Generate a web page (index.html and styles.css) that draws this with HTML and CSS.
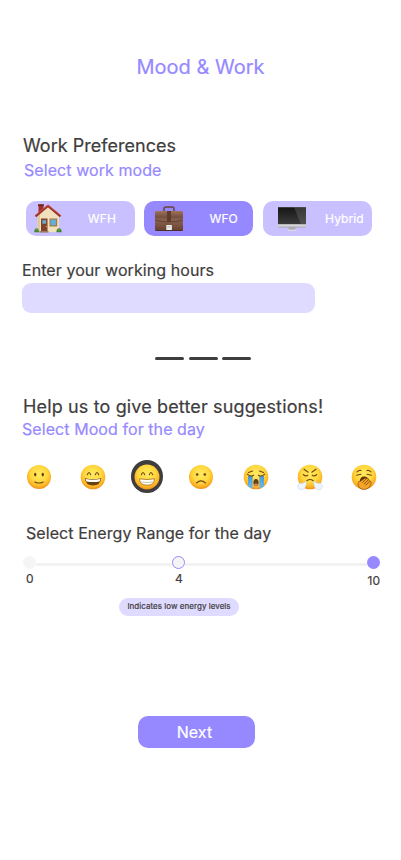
FILE: index.html
```html
<!DOCTYPE html>
<html lang="en">
<head>
<meta charset="utf-8">
<title>Mood &amp; Work</title>
<link rel="stylesheet" href="styles.css">
</head>
<body>
<svg class="defs" width="0" height="0" aria-hidden="true">
  <defs>
    <radialGradient id="face" cx=".5" cy=".38" r=".62"><stop offset="0" stop-color="#ffea62"/><stop offset=".55" stop-color="#ffd83e"/><stop offset=".82" stop-color="#fcb526"/><stop offset="1" stop-color="#ef8f18"/></radialGradient>
    <linearGradient id="leather" x2="0" y2="1"><stop offset="0" stop-color="#a07358"/><stop offset=".3" stop-color="#755040"/><stop offset=".45" stop-color="#8b6250"/><stop offset="1" stop-color="#65402f"/></linearGradient>
    <linearGradient id="screen" x2="0" y2="1"><stop offset="0" stop-color="#151515"/><stop offset="1" stop-color="#3c3c3c"/></linearGradient>
    <linearGradient id="metal" x2="0" y2="1"><stop offset="0" stop-color="#e6e6e6"/><stop offset=".9" stop-color="#d8d8da"/><stop offset="1" stop-color="#a9a9ad"/></linearGradient>
    <linearGradient id="tear" x2="0" y2="1"><stop offset="0" stop-color="#4696d6"/><stop offset="1" stop-color="#71bdf0"/></linearGradient>
  </defs>
</svg>
<main class="screen">
  <h1 class="title">Mood &amp; Work</h1>

  <h2 class="heading">Work Preferences</h2>
  <p class="sub sub-work">Select work mode</p>
  <div class="modes">
    <button class="mode">
      <svg class="mode-icon house" viewBox="0 0 28 29">
        <path d="M3.5 11 14 2l11 9v17H3.5z" fill="#f2dfbb"/>
        <path d="M3.5 11v17H6V10z" fill="#e0c9a0"/>
        <path d="M4.5 .5h5V6l-5 4.5z" fill="#9f3028"/><path d="M4 .3h5.9v1.9H4z" fill="#732622"/>
        <path d="M1.5 12.3 14 2l12.5 10.3" fill="none" stroke="#96312b" stroke-width="2.2"/>
        <path d="M1.5 11.3 14 1l12.5 10.3" fill="none" stroke="#d75748" stroke-width=".9"/>
        <path d="M7 14.5h6.5V28H7z" fill="#804329"/><path d="M8.4 16.2h3.7v3.5H8.4z" fill="#69aed0"/><circle cx="12.3" cy="22.5" r=".6" fill="#efc279"/>
        <path d="M15.5 14.5h7.7v8h-7.7z" fill="#a27849"/><path d="M16.6 15.6h5.5v5.6h-5.5z" fill="#65aed5"/>
        <path d="M5.5 27h9v1.6h-9z" fill="#997b68"/>
        <path d="M.3 28.2q-.3-3.5 2.3-4 2.2 0 2.5 4zM22.3 28.2q.3-3.9 2.7-3.9 2.8.3 2.7 3.9z" fill="#438436"/><circle cx="2.6" cy="25.8" r=".9" fill="#6aa94b"/><circle cx="25" cy="25.8" r=".9" fill="#6aa94b"/>
      </svg>
      <span class="mode-label">WFH</span>
    </button>
    <button class="mode mode-active">
      <svg class="mode-icon briefcase" viewBox="0 0 28 25">
        <path d="M9 5.5V2.8Q9 1 11 1h6q2 0 2 1.8v2.7" fill="none" stroke="#654536" stroke-width="1.5"/>
        <rect y="5" width="28" height="20" rx="1.4" fill="url(#leather)"/>
        <path d="M.5 14.3Q14 17.5 27.5 14.3" fill="none" stroke="#553426" stroke-width=".7"/>
        <path d="M12 5h4v10.5h-4z" fill="#5e3b2c"/>
        <rect x="11.3" y="19" width="5.6" height="5" rx=".5" fill="#e9ece8"/><path d="M12.5 20.8h3.2" stroke="#aab1a9" stroke-width=".8"/>
        <path d="M.3 24.6h27.4" stroke="#442a22" stroke-width=".8"/>
      </svg>
      <span class="mode-label">WFO</span>
    </button>
    <button class="mode">
      <svg class="mode-icon monitor" viewBox="0 0 28 24">
        <path d="M10.5 20h7v3h-7z" fill="#aaaab0"/><path d="M9.8 22.6h8.4v1.2H9.8z" fill="#dedee1"/>
        <rect width="28" height="20.5" rx=".8" fill="url(#metal)"/>
        <path d="M0 .2h28v17H0z" fill="url(#screen)"/>
        <path d="M16 .2h12v17h-5z" fill="#777" opacity=".35"/>
      </svg>
      <span class="mode-label">Hybrid</span>
    </button>
  </div>

  <label class="field-label" for="hours">Enter your working hours</label>
  <input class="field" id="hours" type="text">

  <div class="dashes"><span class="dash"></span><span class="dash"></span><span class="dash"></span></div>

  <h2 class="heading heading-mood">Help us to give better suggestions!</h2>
  <p class="sub">Select Mood for the day</p>
  <div class="moods">
    <span class="mood"><svg viewBox="0 0 26 26">
      <circle cx="13" cy="13" r="12" fill="url(#face)"/>
      <ellipse cx="9.2" cy="10.6" rx="1.2" ry="1.8" fill="#68400d"/><ellipse cx="16.8" cy="10.6" rx="1.2" ry="1.8" fill="#68400d"/>
      <path d="M8.8 17.9Q13 20.2 17.2 17.9" class="line"/>
    </svg></span>
    <span class="mood"><svg viewBox="0 0 26 26">
      <circle cx="13" cy="13" r="12.3" fill="url(#face)"/>
      <path d="M7.3 10.8Q9 6.2 10.7 10.8M15.3 10.8Q17 6.2 18.7 10.8" class="line"/>
      <path d="M4.8 14.3Q13 16 21.2 14.3 20.5 21.5 13 21.5T4.8 14.3z" fill="#6a4210"/>
      <path d="M5.6 15Q13 16.6 20.4 15l-.8 2.4Q13 18.5 6.4 17.4z" fill="#fff"/>
    </svg></span>
    <span class="mood mood-active"><svg viewBox="0 0 26 26">
      <circle cx="13" cy="13" r="12.5" fill="url(#face)"/>
      <path d="M7.3 10.8Q9 6.2 10.7 10.8M15.3 10.8Q17 6.2 18.7 10.8" class="line"/>
      <path d="M5.6 14.8Q13 16.2 20.4 14.8 20.8 21.2 13 21.2T5.6 14.8z" fill="#fff" stroke="#a3690f" stroke-width=".8"/>
      <path d="M6.2 17.9Q13 19.2 19.8 17.9" fill="none" stroke="#b9a98c" stroke-width=".7"/>
    </svg></span>
    <span class="mood"><svg viewBox="0 0 26 26">
      <circle cx="13" cy="13" r="12" fill="url(#face)"/>
      <circle cx="9.2" cy="10.5" r="1.3" fill="#68400d"/><circle cx="16.8" cy="10.5" r="1.3" fill="#68400d"/>
      <path d="M8.5 19Q13 14.8 17.5 19" class="line"/>
    </svg></span>
    <span class="mood"><svg viewBox="0 0 26 26">
      <circle cx="13" cy="13" r="12.3" fill="url(#face)"/>
      <path d="M5 12h4.6v12.8Q7 24 5 22.3zM16.4 12H21v10.3q-2 1.7-4.6 2.5z" fill="url(#tear)"/>
      <path d="M4.3 10.2Q7.5 13.2 10.6 11.2M21.7 10.2Q18.5 13.2 15.4 11.2M5.5 8.5 9.5 7M20.5 8.5 16.5 7" class="line"/>
      <ellipse cx="13" cy="18.5" rx="2.6" ry="3.4" fill="#684016"/><path d="M11 20.4q2-1.8 4 0-2 2.5-4 0z" fill="#e68a64"/>
    </svg></span>
    <span class="mood"><svg viewBox="0 0 26 26">
      <circle cx="13" cy="13" r="12.3" fill="url(#face)"/>
      <path d="M7 5.2 11.2 8.2M19 5.2 14.8 8.2M6.3 10.5Q8.7 12.8 10.8 11.2M19.7 10.5Q17.3 12.8 15.2 11.2M9.8 16.8Q13 14.3 16.2 16.8" class="line"/>
      <path d="M9.5 17.2Q9.2 25.8 4.3 25.6.2 25.4.7 21.7 1.6 18.5 5 19.5 7.5 18.5 9.5 17.2zM16.5 17.2Q16.8 25.8 21.7 25.6q4.1-.2 3.6-3.9-.9-3.2-4.3-2.2-2.5-1-4.5-2.3z" fill="#edf5ff" stroke="#c1d3e8" stroke-width=".5"/>
    </svg></span>
    <span class="mood"><svg viewBox="0 0 26 26">
      <circle cx="13" cy="13" r="12.3" fill="url(#face)"/>
      <path d="M6 7.8Q8 5.9 10 6.6M20 7.8Q18 5.9 16 6.6M5.5 11.2 10 10.3M20.5 11.2 16 10.3" class="line"/>
      <path d="M8.8 16.5Q10 12.2 13 12.4q4.3.2 5.2 4.4L12 21z" fill="#5f300b"/>
      <path d="M7 19.5Q7 16.5 9.5 17.3l4.2-3q1.4-.6 1.5.5l1.5-.3q1.3.2.8 1.6 1.8-.1 1.4 1.4 2 0 1.3 1.7-1.7 6.5-7.9 6.2Q7.5 25 7 19.5z" fill="#f2a526" stroke="#8b4e0b" stroke-width=".7"/>
      <path d="M11.5 18.7 15 15M13 20 17 16.2M14.5 21.2 18.5 17.7" fill="none" stroke="#8b4e0b" stroke-width=".9"/>
    </svg></span>
  </div>

  <h3 class="energy-title">Select Energy Range for the day</h3>
  <div class="slider">
    <span class="knob knob-start"></span>
    <span class="track track-low"></span>
    <span class="knob knob-current"></span>
    <span class="track track-high"></span>
    <span class="knob knob-end"></span>
  </div>
  <div class="scale"><span class="min">0</span><span class="value">4</span><span class="max">10</span></div>
  <div class="hint">Indicates low energy levels</div>

  <button class="next">Next</button>
</main>
</body>
</html>
```
FILE: styles.css
```css
* { box-sizing: border-box; }

body {
  margin: 0;
  background: #fff;
  color: #3f3d3d;
  font-family: Inter, "Liberation Sans", sans-serif;
  font-weight: 400;
  -webkit-text-stroke: .2px currentColor;
}

h1, h2, h3, p { margin: 0; font-weight: inherit; }

button {
  border: 0;
  padding: 0;
  color: #fff;
  font-family: inherit;
  font-weight: inherit;
}

.defs { display: block; }

.screen {
  display: flex;
  flex-direction: column;
  width: 401px;
  height: 860px;
  padding: 55px 20px 0 22px;
}

.title {
  align-self: center;
  color: #9689ff;
  font-size: 20px;
  line-height: 24px;
  margin: 0 2px 55px 0;
}

.heading {
  font-size: 18px;
  line-height: 24px;
  padding-left: 1px;
  letter-spacing: .03px;
}

.heading-mood { letter-spacing: .14px; }

.sub {
  color: #9689ff;
  font-size: 16px;
  line-height: 21px;
  letter-spacing: .07px;
}

.sub-work { margin-top: 2px; padding-left: 2px; }

.modes {
  display: grid;
  grid-template-columns: 109px 109px 109px;
  column-gap: 9.4px;
  margin: 20px 0 24px 4px;
}

.mode {
  display: flex;
  align-items: center;
  justify-content: space-between;
  height: 35px;
  border-radius: 10px;
  background: #c9c0ff;
  font-size: 12px;
  letter-spacing: .1px;
}

.mode-active { background: #9689ff; }
.mode-icon { display: block; flex: none; }
.house { width: 28px; height: 29px; margin-left: 8px; }
.briefcase { width: 28px; height: 25px; margin-left: 11px; }
.monitor { width: 28px; height: 24px; margin-left: 15px; }
.mode-label { margin-right: 8px; }
.house + .mode-label { margin-right: 19px; }
.briefcase + .mode-label { margin-right: 15.5px; }

.field-label {
  font-size: 16px;
  line-height: 21px;
  letter-spacing: .07px;
}

.field {
  width: 293px;
  height: 30px;
  margin-top: 2px;
  padding: 0 10px;
  border: 0;
  border-radius: 9px;
  background: #dfdaff;
}

.dashes { display: flex; gap: 4.5px; margin: 44px 0 35px 133px; }
.dash { width: 29px; height: 3px; border-radius: 1.5px; background: #3f3d3d; }

.moods {
  display: flex;
  justify-content: space-between;
  width: 357px;
  margin: 20px 0 30px 1px;
}

.mood {
  display: grid;
  place-items: center;
  width: 32px;
  height: 33px;
  border-radius: 50%;
}

.mood svg { width: 26px; height: 26px; }
.mood-active { background: #3f3d3d; }
.line { fill: none; stroke: #744610; stroke-width: 1.1; stroke-linecap: round; }

.energy-title {
  font-size: 16px;
  line-height: 21px;
  padding-left: 4px;
  letter-spacing: .07px;
}

.slider { display: flex; align-items: center; height: 13px; margin: 12px 0 0 1px; }
.knob { width: 13px; height: 13px; flex: none; border-radius: 50%; background: #f5f5f5; }
.knob-current { border: 1px solid #9689ff; }
.knob-end { background: #9689ff; }
.track { height: 3px; margin-top: 4px; background: #f2f2f2; }
.track-low { width: 136px; }
.track-high { width: 182px; }

.scale {
  display: grid;
  grid-template-columns: 149px 1fr auto;
  width: 354px;
  margin-left: 4px;
  font-size: 12px;
  line-height: 16px;
  padding-top: 2px;
}
.max { padding-top: 2px; }

.hint {
  width: 120px;
  height: 18px;
  margin: 9px 0 0 97px;
  border-radius: 9px;
  background: #dfdaff;
  font-size: 8px;
  line-height: 17px;
  text-align: center;
  letter-spacing: .04px;
}

.next {
  width: 117px;
  height: 32px;
  margin: 100px 0 0 116px;
  padding-right: 4px;
  border-radius: 10px;
  background: #9689ff;
  font-size: 16px;
  letter-spacing: .1px;
}
```
